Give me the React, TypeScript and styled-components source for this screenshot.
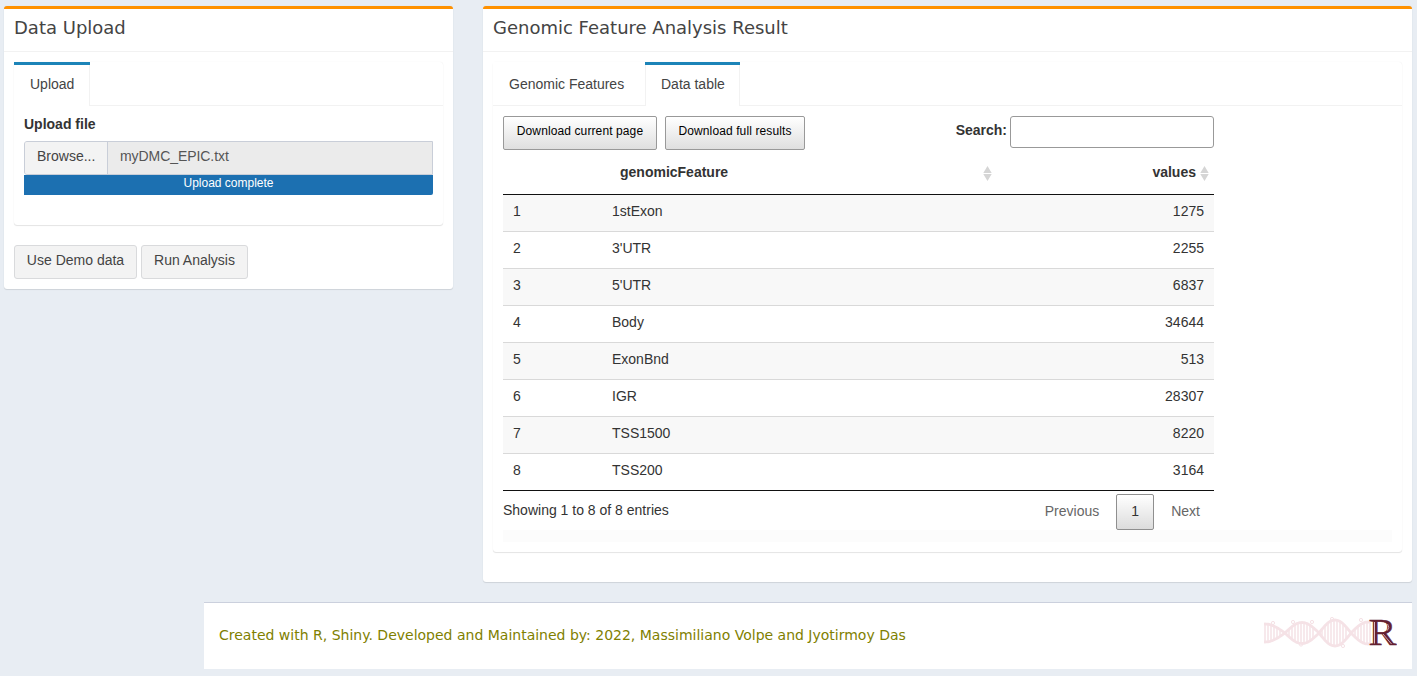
import React from 'react';
import styled, { createGlobalStyle } from 'styled-components';

const GlobalStyle = createGlobalStyle`
  * { box-sizing: border-box; }
  body {
    margin: 0;
    background: #e8edf3;
    color: #333;
    font: 14px/20px "Liberation Sans", Arial, sans-serif;
    overflow: hidden;
  }
`;

const Page = styled.div`
  height: 676px;
  padding: 6px 4px 7px;
  display: flex;
  flex-direction: column;
`;

const Columns = styled.main`
  display: grid;
  grid-template-columns: 449px 929px;
  column-gap: 30px;
  align-items: start;
`;

const Box = styled.section<{ $bottom: number }>`
  background: #fff;
  border-top: 3px solid #ff9100;
  border-radius: 3px;
  box-shadow: 0 1px 1px rgba(0, 0, 0, 0.1), 0 0 1px rgba(60, 80, 120, 0.15);
  padding-bottom: ${(p) => p.$bottom}px;
`;

const BoxTitle = styled.h3`
  margin: 0;
  height: 43px;
  padding: 10px;
  border-bottom: 1px solid #f2f2f2;
  color: #444;
  font: 400 18px/18px "DejaVu Sans", sans-serif;
`;

const BoxBody = styled.div`
  padding: 10px 10px 0;
`;

const TabPanel = styled.div`
  border-radius: 3px;
  box-shadow: 0 1px 1px rgba(0, 0, 0, 0.1), 0 0 1px rgba(0, 0, 0, 0.1);
  margin-bottom: 20px;
`;

const TabBar = styled.div`
  display: flex;
  height: 44px;
  border-bottom: 1px solid #f2f2f2;
`;

const Tab = styled.div<{ $active?: boolean; $first?: boolean; $width: number }>`
  width: ${(p) => p.$width}px;
  height: 44px;
  padding: 9px 0 0 16px;
  border-top: 3px solid ${(p) => (p.$active ? '#1c84b8' : 'transparent')};
  color: #444;
  background: #fff;
  ${(p) => (p.$active ? '' : 'border-bottom: 1px solid #f2f2f2;')}
  box-shadow: ${(p) => (p.$active ? 'inset -1px 0 #f2f2f2' + (p.$first ? '' : ', inset 1px 0 #f2f2f2') : 'none')};
`;

const TabContent = styled.div`
  padding: 10px;
`;

const FieldLabel = styled.label`
  display: block;
  height: 25px;
  font-weight: 700;
  line-height: 17px;
`;

const FileInput = styled.div`
  display: flex;
  height: 34px;
  border: 1px solid #c9ced8;
  border-radius: 3px 0 0 3px;
  background: #ebebeb;
  color: #555;
  line-height: 29px;
`;

const Browse = styled.span`
  width: 83px;
  padding-left: 12px;
  border-right: 1px solid #c9ced8;
  border-radius: 2px 0 0 2px;
  background: #f3f3f3;
  color: #444;
`;

const FileName = styled.span`
  padding-left: 12px;
  letter-spacing: -0.07px;
`;

const Progress = styled.div`
  height: 20px;
  margin-bottom: 20px;
  border-radius: 0 0 2px 0;
  background: #1c70b1;
  color: #fff;
  font-size: 12px;
  line-height: 16px;
  text-align: center;
`;

const ButtonRow = styled.div`
  display: flex;
  gap: 4px;
`;

const Button = styled.button<{ $width: number }>`
  width: ${(p) => p.$width}px;
  height: 34px;
  padding: 0 0 4px;
  border: 1px solid #d9dadc;
  border-radius: 3px;
  background: #f3f3f3;
  color: #444;
  font: inherit;
`;

const Widget = styled.div`
  width: 711px;
`;

const Toolbar = styled.div`
  display: flex;
  height: 34px;
`;

const ExportButton = styled.button<{ $width: number }>`
  width: ${(p) => p.$width}px;
  height: 34px;
  margin-right: 8px;
  padding: 0 0 4px;
  border: 1px solid #999;
  border-radius: 2px;
  background: linear-gradient(#fff, #dfdfdf);
  color: #000;
  font: 12px "Liberation Sans", Arial, sans-serif;
  letter-spacing: 0.11px;
`;

const Search = styled.label`
  display: flex;
  margin-left: auto;
  font-weight: 700;
  line-height: 28px;
`;

const SearchInput = styled.input`
  width: 204px;
  height: 32px;
  margin-left: 3px;
  border: 1px solid #999;
  border-radius: 3px;
  background: #fff;
`;

const Table = styled.table`
  width: 711px;
  table-layout: fixed;
  border-collapse: separate;
  border-spacing: 0;
  border-bottom: 1px solid #111;
`;

const HeadCell = styled.th<{ $width: number; $right?: boolean }>`
  width: ${(p) => p.$width}px;
  height: 45px;
  padding: 12px 0 0;
  border-bottom: 1px solid #111;
  vertical-align: top;
`;

const HeadInner = styled.div<{ $right?: boolean }>`
  display: flex;
  justify-content: ${(p) => (p.$right ? 'flex-end' : 'space-between')};
  gap: 4px;
  padding: 0 5px 0 18px;
`;

const Row = styled.tr`
  &:nth-child(odd) { background: #f8f8f8; }
  & + & > td { border-top: 1px solid #d9d9d9; }
`;

const Cell = styled.td<{ $right?: boolean }>`
  padding: 6px 10px 10px;
  line-height: 20px;
  text-align: ${(p) => (p.$right ? 'right' : 'left')};
`;

const TableFooter = styled.div`
  display: flex;
  height: 39px;
  padding-top: 3px;
`;

const Info = styled.span`
  padding-top: 6px;
`;

const Pager = styled.nav`
  display: flex;
  gap: 17px;
  margin-left: auto;
  padding-right: 14px;
  color: #666;
  line-height: 34px;
`;

const CurrentPage = styled.span`
  width: 38px;
  height: 36px;
  border: 1px solid #8f8f8f;
  border-radius: 2px;
  background: linear-gradient(#fff, #dcdcdc);
  color: #333;
  line-height: 32px;
  text-align: center;
`;

const Strip = styled.div`
  height: 12px;
  background: #fcfcfc;
`;

const Footer = styled.footer`
  display: flex;
  justify-content: space-between;
  width: 1208px;
  height: 67px;
  margin: 20px 0 0 200px;
  padding: 0 15px;
  border-top: 1px solid #cbd0dd;
  background: #fff;
  color: #808000;
  font: 14px/64px "DejaVu Sans", sans-serif;
`;

const Logo = styled.svg`
  width: 134px;
  height: 40px;
  margin-top: 10px;
`;

const CROSSINGS = [-18, 22, 56, 88, 122];
const AMPLITUDES = [9, 10.5, 13, 11];
const HELIX_END = 107;

function offsetAt(x: number) {
  for (let i = 0; i < AMPLITUDES.length; i++) {
    const start = CROSSINGS[i];
    const end = CROSSINGS[i + 1];
    if (x >= start && x <= end) {
      return AMPLITUDES[i] * Math.sin((Math.PI * (x - start)) / (end - start)) * (i % 2 ? -1 : 1);
    }
  }
  return 0;
}

function strand(sign: number) {
  const points: string[] = [];
  for (let x = 1; x <= HELIX_END; x++) points.push(`${x},${(20 + sign * offsetAt(x)).toFixed(2)}`);
  return points.join(' ');
}

const RUNGS = Array.from({ length: 36 }, (_, i) => 2 + i * 3).filter((x) => Math.abs(offsetAt(x)) > 3);

const DnaLogo = () => (
  <Logo viewBox="0 0 134 40">
    <g fill="none" stroke="#f5e2e6">
      {RUNGS.map((x) => (
        <line key={x} x1={x} x2={x} y1={20 - Math.abs(offsetAt(x))} y2={20 + Math.abs(offsetAt(x))} strokeWidth="1.5" />
      ))}
      <polyline points={strand(1)} strokeWidth="2.8" />
      <polyline points={strand(-1)} strokeWidth="2.8" />
      <circle cx="10" cy="10" r="1.6" />
      <circle cx="30" cy="9" r="1.6" />
      <circle cx="38" cy="31.5" r="1.6" />
      <circle cx="49" cy="9" r="1.6" />
      <circle cx="69" cy="6" r="1.6" />
      <circle cx="80" cy="33" r="1.6" />
      <circle cx="98" cy="7" r="1.6" />
    </g>
    <text x="105.5" y="31.8" textLength="28" lengthAdjust="spacingAndGlyphs" fontFamily="Liberation Serif, serif" fontSize="37.5" fill="#642030" stroke="#642030" strokeWidth="0.5">R</text>
    <path d="M111.5 9V30.5" stroke="#d9b9c2" strokeWidth="1" />
    <path d="M120 21L128.5 31" stroke="#d9b9c2" strokeWidth="0.9" />
    <path d="M124.6 11Q127 14.5 124.4 17.5" fill="none" stroke="#d9b9c2" strokeWidth="0.9" />
  </Logo>
);

const SortIcon = styled.svg`
  width: 9px;
  height: 15px;
  margin-top: 4px;
`;

const Sort = () => (
  <SortIcon viewBox="0 0 9 15">
    <path d="M4.5 0L8.7 7H.3ZM.3 8H8.7L4.5 15Z" fill="#d5d5d5" />
  </SortIcon>
);

const features: [string, number][] = [
  ['1stExon', 1275],
  ["3'UTR", 2255],
  ["5'UTR", 6837],
  ['Body', 34644],
  ['ExonBnd', 513],
  ['IGR', 28307],
  ['TSS1500', 8220],
  ['TSS200', 3164],
];

export default function App() {
  return (
    <Page>
      <GlobalStyle />
      <Columns>
        <Box $bottom={10}>
          <BoxTitle>Data Upload</BoxTitle>
          <BoxBody>
            <TabPanel>
              <TabBar>
                <Tab $active $first $width={76}>Upload</Tab>
              </TabBar>
              <TabContent>
                <FieldLabel>Upload file</FieldLabel>
                <FileInput>
                  <Browse>Browse...</Browse>
                  <FileName>myDMC_EPIC.txt</FileName>
                </FileInput>
                <Progress>Upload complete</Progress>
              </TabContent>
            </TabPanel>
            <ButtonRow>
              <Button $width={123}>Use Demo data</Button>
              <Button $width={107}>Run Analysis</Button>
            </ButtonRow>
          </BoxBody>
        </Box>
        <Box $bottom={10}>
          <BoxTitle>Genomic Feature Analysis Result</BoxTitle>
          <BoxBody>
            <TabPanel>
              <TabBar>
                <Tab $first $width={152}>Genomic Features</Tab>
                <Tab $active $width={95}>Data table</Tab>
              </TabBar>
              <TabContent>
                <Widget>
                  <Toolbar>
                    <ExportButton $width={154}>Download current page</ExportButton>
                    <ExportButton $width={140}>Download full results</ExportButton>
                    <Search>
                      Search:
                      <SearchInput />
                    </Search>
                  </Toolbar>
                  <Table>
                    <thead>
                      <tr>
                        <HeadCell $width={99} />
                        <HeadCell $width={395}>
                          <HeadInner>genomicFeature<Sort /></HeadInner>
                        </HeadCell>
                        <HeadCell $width={217}>
                          <HeadInner $right>values<Sort /></HeadInner>
                        </HeadCell>
                      </tr>
                    </thead>
                    <tbody>
                      {features.map(([name, value], i) => (
                        <Row key={name}>
                          <Cell>{i + 1}</Cell>
                          <Cell>{name}</Cell>
                          <Cell $right>{value}</Cell>
                        </Row>
                      ))}
                    </tbody>
                  </Table>
                  <TableFooter>
                    <Info>Showing 1 to 8 of 8 entries</Info>
                    <Pager>
                      <span>Previous</span>
                      <CurrentPage>1</CurrentPage>
                      <span>Next</span>
                    </Pager>
                  </TableFooter>
                </Widget>
                <Strip />
              </TabContent>
            </TabPanel>
          </BoxBody>
        </Box>
      </Columns>
      <Footer>
        <span>Created with R, Shiny. Developed and Maintained by: 2022, Massimiliano Volpe and Jyotirmoy Das</span>
        <DnaLogo />
      </Footer>
    </Page>
  );
}
